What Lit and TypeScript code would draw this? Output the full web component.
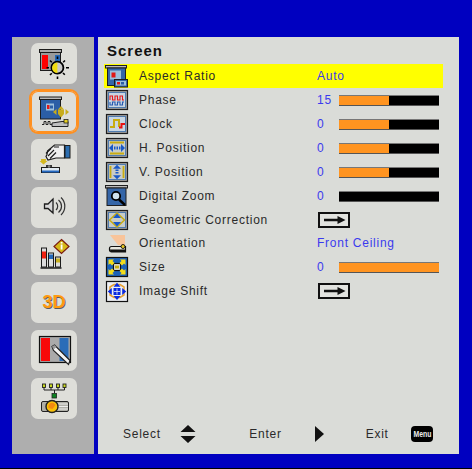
import { LitElement, html, css, svg } from "lit";
import { customElement } from "lit/decorators.js";

const B = "#1c1c1c";

const navIcons = [
  svg`<svg viewBox="31 43 46 41">
    <rect x="39.5" y="49.5" width="22" height="3" fill="#aaa" stroke="${B}"/>
    <rect x="40.5" y="52.5" width="20" height="18" fill="#9a9a9a" stroke="${B}"/>
    <rect x="42" y="55" width="6" height="14" fill="#f00"/>
    <rect x="55" y="55" width="5" height="7" fill="#2468b8"/>
    <g stroke="#000" stroke-width="1.6">
      <path d="M57.5 56.5v2.500M57.500 76.500v2.500M46.500 67.700h2.500M66 67.700h3M50 60.500l1.800 1.800M63 73l1.800 1.800M65 60.500l-1.800 1.800M50 75l1.800-1.800"/>
    </g>
    <circle cx="57.400" cy="67.700" r="6" fill="#c8c8c8" stroke="#000" stroke-width="1.800"/>
    <path d="M57.400 62.400a5.300 5.300 0 0 0 0 10.600z" fill="#f0dc10"/>
  </svg>`,
  svg`<svg viewBox="31 91.500 46 41">
    <rect x="39.500" y="97.500" width="22" height="2.500" fill="#bbb" stroke="${B}"/>
    <rect x="40.500" y="100" width="20" height="19.500" fill="#2b5ea6" stroke="${B}"/>
    <rect x="46" y="104" width="8" height="7" fill="#9cc0dc"/>
    <rect x="47" y="105.500" width="2.500" height="4" fill="#e01818"/>
    <rect x="50" y="106" width="3" height="3" fill="#2b5ea6"/>
    <g fill="#c8ac1c">
      <path d="M61 106.500l3 3.500h-6z"/><path d="M61 118l3-3.500h-6z"/>
      <path d="M53 112.500l3.500-3v6z"/><path d="M69 112.500l-3.500-3v6z"/>
      <rect x="58" y="110" width="6" height="4.500"/>
    </g>
    <path d="M42 125h2v-3h2v3h2v-3h2v3h2" fill="none" stroke="#222" stroke-width="1"/>
    <path d="M52 123.500l10-1.500h6v5H52z" fill="#bfbfbf" stroke="#222" stroke-width="1"/>
    <rect x="64" y="120" width="4" height="3.500" fill="#e8d020" stroke="#222" stroke-width=".8"/>
  </svg>`,
  svg`<svg viewBox="31 140 46 41">
    <path d="M47.500 152l7-6h10v13H56l-8 2-2-3.500 1-2z" fill="#eee" stroke="${B}" stroke-width="1.200"/>
    <path d="M46 154.500l5-5M48 157l6-6M50 159.500l6-6M54 148h5" stroke="${B}" stroke-width="1.200" fill="none"/>
    <rect x="65" y="146.500" width="5" height="12.500" fill="#2b6db0" stroke="${B}"/>
    <path d="M41 160h5l-.2 2h1.700l-4 3.500-4-3.500h1.600z" fill="#d4b820"/>
    <rect x="46" y="166" width="6" height="2.500" fill="#333"/>
    <rect x="41.500" y="168.500" width="18" height="5" fill="#dfe8f0" stroke="${B}"/>
    <rect x="42" y="171.500" width="17" height="2" fill="#2468c0"/>
    <circle cx="49" cy="167.500" r="1.300" fill="#888"/>
  </svg>`,
  svg`<svg viewBox="31 187 46 41">
    <path d="M44.500 204h3.500l5-5v14l-5-4.500h-3.500z" fill="#d8d8d8" stroke="${B}" stroke-width="1.300"/>
    <g fill="none" stroke="#333" stroke-width="1.200">
      <path d="M56 202.500a5 5 0 0 1 0 7.500M58.500 200a8 8 0 0 1 0 12.500M61 197.500a12 12 0 0 1 0 17.500"/>
    </g>
  </svg>`,
  svg`<svg viewBox="31 234.500 46 41">
    <rect x="41.500" y="248.500" width="5" height="19" fill="#ddd" stroke="${B}"/>
    <rect x="42" y="252" width="4" height="7" fill="#f02010"/>
    <rect x="48.500" y="253.500" width="5" height="14" fill="#ddd" stroke="${B}"/>
    <rect x="49" y="255" width="4" height="4.500" fill="#2468b8"/>
    <rect x="55.500" y="257.500" width="5" height="10" fill="#ddd" stroke="${B}"/>
    <rect x="56" y="259" width="4" height="4" fill="#c8b020"/>
    <path d="M40.500 268.500h21" stroke="#111" stroke-width="1.400"/>
    <path d="M61.500 240l7.500 7-7.500 7-7.500-7z" fill="#d6b818" stroke="#7a1a10" stroke-width="1.200"/>
    <rect x="60.700" y="245" width="1.800" height="5" fill="#fff"/>
    <rect x="60.700" y="242.500" width="1.800" height="1.600" fill="#fff"/>
  </svg>`,
  null,
  svg`<svg viewBox="31 330 46 41">
    <rect x="39.500" y="336.500" width="31" height="26" fill="#aaa" stroke="#111" stroke-width="1.200"/>
    <rect x="41" y="338" width="9" height="23" fill="#f80808"/>
    <rect x="59.500" y="338" width="9" height="23" fill="#2a6cb8"/>
    <path d="M52 346.500l2.500-1.500 15.500 15.500-1.500 4-15-14z" fill="#f4f4f4" stroke="#222" stroke-width="1.200"/>
    <path d="M52 346.500l2.500-1.500 2 2-3 2.500z" fill="#999"/>
  </svg>`,
  svg`<svg viewBox="31 378 46 41">
    <g fill="#c8d820" stroke="#222" stroke-width=".9">
      <rect x="42.500" y="384" width="3" height="3.500"/>
      <rect x="49.500" y="384" width="3" height="3.500"/>
      <rect x="56.500" y="384" width="3" height="3.500"/>
      <rect x="63" y="384" width="3" height="3.500"/>
    </g>
    <path d="M44 387.500v2.500h20.500v-2.500M51 387.500v2.500M58 387.500v2.500M54.500 390v3" fill="none" stroke="#222"/>
    <rect x="52" y="393.500" width="4.500" height="4.500" fill="#0c8020" stroke="#222" stroke-width=".8"/>
    <rect x="41.500" y="401.500" width="27" height="10" rx="1.500" fill="#b0b0a8" stroke="#222"/>
    <path d="M58 404h10M58 406.500h10M58 409h10" stroke="#eee"/>
    <circle cx="52" cy="406.500" r="6" fill="#f8c008" stroke="#222" stroke-width="1.400"/>
    <path d="M48.500 408a4 4 0 0 1 5-5l2 2-3 4z" fill="#f48a10"/>
  </svg>`,
];

const frame = (inner: unknown, bg = "#c9d6e2") => svg`
  <rect x="2.500" y="2.500" width="21" height="19" fill="#a0a0a0" stroke="#1e1e1e" stroke-width="1.200"/>
  <rect x="4.500" y="4.500" width="17" height="15" fill="${bg}" stroke="#4f7cb0"/>
  ${inner}`;

const rowIcons = [
  svg`<rect x="1.500" y="1.500" width="21" height="2.500" fill="#bbb" stroke="#1e1e1e"/>
    <rect x="3.500" y="4" width="18" height="17.500" fill="#3566a8" stroke="#1e1e1e"/>
    <rect x="6" y="6.500" width="11" height="9" fill="#9cc0dc"/>
    <rect x="7.500" y="8.500" width="4" height="5" fill="#e01818"/>
    <rect x="10.500" y="15.500" width="13" height="7.500" fill="#3566a8" stroke="#1e1e1e"/>
    <rect x="12" y="17" width="10" height="4.500" fill="#9cc0dc"/>
    <rect x="13" y="18" width="3" height="2.500" fill="#e01818"/>
    <rect x="17" y="18" width="3" height="2.500" fill="#2b5ea6"/>`,
  frame(svg`<path d="M6 12V8h2.500v4h2.500V8h2.500v4H16V8h2.500v4H20" fill="none" stroke="#e81818" stroke-width="1.100"/>
    <path d="M6 14v3h2.500v-3h2.500v3h2.500v-3H16v3h2.500v-3H20" fill="none" stroke="#2458b0" stroke-width="1.100"/>`),
  frame(svg`<path d="M6 15h4V8h5v7" fill="none" stroke="#c8ac10" stroke-width="2"/>
    <path d="M15 15.500h2.500V12H21" fill="none" stroke="#e81010" stroke-width="2"/>`),
  frame(svg`<path d="M6 6.500h14M6 17.500h14" stroke="#c8ac10" stroke-width="1.800"/>
    <path d="M5 12l4-4v8zM21 12l-4-4v8z" fill="#1858c8"/>
    <path d="M10 10.500h1.500v3H10zM12.500 10.500H14v3h-1.500zM15 10.500h1.500v3H15z" fill="#1858c8"/>`, "#c8ccc8"),
  frame(svg`<path d="M6.500 6v12M19.500 6v12" stroke="#c8ac10" stroke-width="1.800"/>
    <path d="M13 4.800l4 4h-8zM13 19.200l4-4h-8z" fill="#1858c8"/>
    <path d="M11.500 9.500h3V11h-3zM11.500 12h3v1.500h-3z" fill="#1858c8"/>`, "#c8ccc8"),
  svg`<rect x="1.500" y="1.500" width="22" height="2.500" fill="#bbb" stroke="#1e1e1e"/>
    <rect x="3" y="4" width="19" height="17.500" fill="#3566a8" stroke="#1e1e1e"/>
    <circle cx="12" cy="12" r="4.200" fill="#cfe2ee" stroke="#000" stroke-width="1.800"/>
    <path d="M15 15.500l6 5.500" stroke="#000" stroke-width="2.400"/>`,
  frame(svg`<path d="M5.500 12L13 5l7.500 7-7.500 7z" fill="none" stroke="#c8ac10" stroke-width="1.500"/>
    <path d="M13 5.500l4 4.500H9zM13 18.500l4-4.500H9z" fill="#1858c8"/>`, "#c8ccc8"),
  svg`<path d="M6 4h15v10h-7z" fill="#f8c49a"/>
    <path d="M5.500 17.500a2 2 0 0 1 2-2h14v5.500H7.500a2 2 0 0 1-2-2z" fill="#e8e8e0" stroke="#111" stroke-width="1.200"/>
    <path d="M5.500 18.500h16v2.500H7z" fill="#111"/>
    <circle cx="19" cy="15.500" r="2" fill="#e8c820" stroke="#111" stroke-width=".9"/>`,
  svg`<rect x="2.500" y="2.500" width="21" height="19" fill="#1c62b8" stroke="#111" stroke-width="1.200"/>
    <rect x="9.500" y="8.500" width="7" height="7" fill="#e8e8e0" stroke="#111" stroke-width="1.200"/>
    <rect x="11" y="10.500" width="4" height="3" fill="#c8ac10"/>
    <path d="M4.500 4.500h5.500L8.500 6l2 2-2.500 2.500-2-2-1.500 1.500zM21.500 4.500H16L17.500 6l-2 2 2.500 2.500 2-2 1.500 1.500zM4.500 19.500H10L8.500 18l2-2L8 13.500l-2 2-1.500-1.500zM21.500 19.500H16l1.500-1.500-2-2 2.500-2.500 2 2 1.500-1.500z" fill="#f4dc18"/>`,
  svg`<rect x="2.500" y="2.500" width="21" height="20" fill="#eef0f4" stroke="#111" stroke-width="1.200"/>
    <path d="M6 8l4-2.500h6L20 8v8l-4 2.500h-6L6 16z" fill="none" stroke="#e8a030" stroke-width="1.500"/>
    <path d="M13 3.800l3.500 4h-7zM13 21l3.500-4h-7zM3.800 12.500l4-3.500v7zM22.200 12.500l-4-3.500v7z" fill="#0828e0"/>
    <rect x="9.500" y="9" width="7" height="7" fill="#0828e0"/>
    <path d="M10 12.500h6M13 9.500v6" stroke="#eef0f4" stroke-width=".8"/>`,
];

const arrowBtn = html`<svg class="arrow" viewBox="0 0 32 16">
  <rect x="1" y="1" width="30" height="14" fill="#e2e3df" stroke="#111" stroke-width="2"/>
  <path d="M6 6.800h13.500V4l8 4-8 4V9.200H6z" fill="#111"/>
</svg>`;

type Row = { label: string; value?: string; bar?: number; arrow?: boolean; sel?: boolean; tight?: boolean };
const rows: Row[] = [
  { label: "Aspect Ratio", value: "Auto", sel: true },
  { label: "Phase", value: "15", bar: 50 },
  { label: "Clock", value: "0", bar: 50 },
  { label: "H. Position", value: "0", bar: 50 },
  { label: "V. Position", value: "0", bar: 50 },
  { label: "Digital Zoom", value: "0", bar: 0 },
  { label: "Geometric Correction", arrow: true },
  { label: "Orientation", value: "Front Ceiling", tight: true },
  { label: "Size", value: "0", bar: 100 },
  { label: "Image Shift", arrow: true },
];

@customElement("app-root")
export class AppRoot extends LitElement {
  static styles = css`
    :host {
      display: block;
      width: 472px;
      height: 469px;
      background: #0000c0;
      border-bottom: 1px solid #000;
      box-sizing: border-box;
      font-family: "Liberation Sans", Arial, sans-serif;
      overflow: hidden;
    }
    .osd {
      display: flex;
      gap: 4px;
      padding: 37px 13px 0 12px;
      height: 417px;
      box-sizing: content-box;
    }
    .side {
      width: 82px;
      background: #aeaeae;
      padding: 6px 0 0 19px;
      box-sizing: border-box;
      display: flex;
      flex-direction: column;
      gap: 6.86px;
    }
    .tile {
      width: 46px;
      height: 41px;
      border-radius: 7px;
      background: #deded9;
      flex: none;
      display: flex;
      align-items: center;
      justify-content: center;
    }
    .tile svg { width: 46px; height: 41px; display: block; }
    .tile.on { box-shadow: 0 0 0 2px #ff9020, inset 0 0 0 1px #ff9020; }
    .three {
      font-size: 18px;
      font-weight: bold;
      color: #ff9a10;
      text-shadow: 0.7px 0.7px 0 #5a5a60;
      letter-spacing: 0;
    }
    .main {
      flex: 1;
      background: #dadcd8;
      padding: 4px 16px 0 6px;
      display: flex;
      flex-direction: column;
      color: #1c1c1c;
      min-width: 0;
    }
    h1 {
      margin: 0 0 4px 3px;
      font-size: 15px;
      line-height: 19px;
      font-weight: bold;
      letter-spacing: 1px;
      color: #111;
    }
    .row {
      height: 24px;
      flex: none;
      display: flex;
      align-items: center;
      font-size: 12px;
      letter-spacing: 0.75px;
      color: #2a2a2a;
    }
    .row.sel { background: #ffff00; }
    .row.tight { margin-top: -1px; }
    .ic { width: 24px; height: 24px; flex: none; display: block; overflow: visible; }
    .label { width: 178px; margin-left: 11px; flex: none; white-space: nowrap; }
    .val { color: #3a3aee; width: 22px; flex: none; white-space: nowrap; }
    .bar {
      width: 100px;
      height: 9px;
      background: #000;
      border-top: 1px solid #777;
      border-bottom: 1px solid #555;
      flex: none;
    }
    .fill { height: 100%; background: #ff9420; }
    .arrow { width: 32px; height: 16px; display: block; flex: none; margin-left: 1px; }
    .foot {
      margin-top: auto;
      height: 41px;
      display: flex;
      align-items: center;
      font-size: 12px;
      letter-spacing: 0.75px;
      color: #2a2a2a;
      padding: 0 0 0 19px;
    }
    .foot span { flex: none; }
    .ud { width: 16px; height: 18px; margin-left: 19.4px; flex: none; display: block; }
    .tri { width: 9px; height: 16px; flex: none; display: block; margin-left: 33px; }
    .enter { margin-left: 53px; }
    .exit { margin-left: 42px; }
    .menu {
      margin-left: 22.600px;
      width: 22px;
      height: 16px;
      background: #000;
      color: #eee;
      border-radius: 4px;
      display: flex;
      align-items: center;
      justify-content: center;
      letter-spacing: 0;
    }
    .menu b {
      font-size: 9.500px;
      line-height: 16px;
      transform: scaleX(0.72);
      white-space: nowrap;
    }
  `;

  render() {
    return html`<div class="osd">
      <div class="side">
        ${navIcons.map(
          (ic, i) => html`<div class="tile ${i === 1 ? "on" : ""}">
            ${ic ?? html`<span class="three">3D</span>`}
          </div>`
        )}
      </div>
      <div class="main">
        <h1>Screen</h1>
        ${rows.map(
          (r, i) => html`<div class="row ${r.sel ? "sel" : ""} ${r.tight ? "tight" : ""}">
            <svg class="ic" viewBox="0 0 24 24">${rowIcons[i]}</svg>
            <span class="label">${r.label}</span>
            ${r.arrow
              ? arrowBtn
              : html`<span class="val">${r.value}</span>
                  ${r.bar !== undefined
                    ? html`<div class="bar"><div class="fill" style="width:${r.bar}%"></div></div>`
                    : ""}`}
          </div>`
        )}
        <div class="foot">
          <span>Select</span>
          <svg class="ud" viewBox="0 0 16 18"><path d="M8 0l7.500 7H.5zM8 18l7.500-7H.5z" fill="#111"/></svg>
          <span class="enter">Enter</span>
          <svg class="tri" viewBox="0 0 9 16"><path d="M0 0l9 8-9 8z" fill="#111"/></svg>
          <span class="exit">Exit</span>
          <span class="menu"><b>Menu</b></span>
        </div>
      </div>
    </div>`;
  }
}
